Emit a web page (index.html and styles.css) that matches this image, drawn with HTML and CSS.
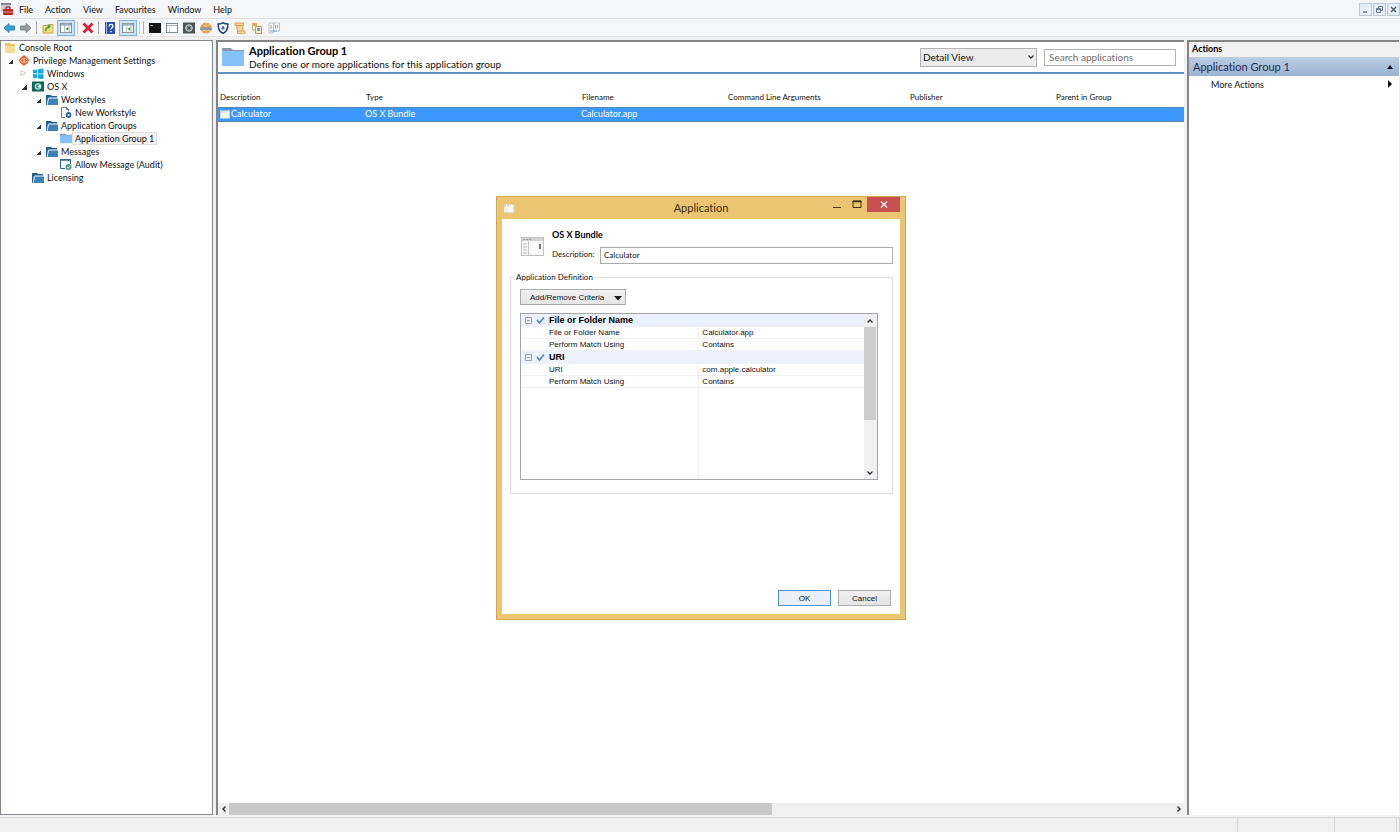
FILE: index.html
```html
<!DOCTYPE html>
<html lang="en">
<head>
<meta charset="utf-8">
<title>Console Root</title>
<link rel="stylesheet" href="styles.css">
</head>
<body>
<svg class="defs" aria-hidden="true">
  <defs>
    <symbol id="folder-dark" viewBox="0 0 12 11"><path d="M0 11V1h5l1 1h5v1.500H2.500L1 11z" fill="#1f5f8f"/><path d="M2.800 4.500H12V11H1.600z" fill="#3b82b5"/><path d="M2.300 4L1.200 10.500" stroke="#e6f0f8" stroke-width=".8"/></symbol>
    <symbol id="folder-light" viewBox="0 0 22 18"><path d="M0 0h9l2 2h11v3H0z" fill="#8e97a8"/><path d="M0 3h22v15H0z" fill="#86c0fb"/></symbol>
    <symbol id="window" viewBox="0 0 12 10"><rect x=".5" y=".5" width="11" height="9" fill="#fbfcfd" stroke="#7e8c98"/><path d="M1 2.500h10" stroke="#a8b4c0"/><path d="M3.500 3v6" stroke="#d5dbe0"/></symbol>
    <symbol id="window-pale" viewBox="0 0 12 10"><rect x=".5" y=".5" width="11" height="9" fill="#fcfbf8" stroke="#d9d4c8"/><path d="M1 2h7" stroke="#b5b5b5" stroke-dasharray="2 1"/><path d="M3.500 3v6" stroke="#dedede"/></symbol>
    <symbol id="pane" viewBox="0 0 13 11"><rect x=".5" y=".5" width="12" height="10" fill="#fff" stroke="#7b8794"/><path d="M1 2h11" stroke="#9fb0c3" stroke-width="2"/><path d="M5 3v7M10 3v7" stroke="#aab5c0"/><path d="M9 4.500v4L6 6.500z" fill="#3a9a3a"/></symbol>
    <symbol id="bundle" viewBox="0 0 23 19"><rect x=".5" y=".5" width="22" height="18" fill="#f6f6f6" stroke="#c2c2c2"/><path d="M1 2.500h21" stroke="#d4d4d4" stroke-width="3"/><path d="M2 2.500h2M5 2.500h2M8 2.500h2" stroke="#999"/><path d="M7.500 4v14" stroke="#c8c8c8"/><path d="M2 7h4M2 10h4M2 13h4M2 16h4" stroke="#bbb"/><rect x="10" y="6" width="7" height="11" fill="#fff"/><path d="M19 7v5" stroke="#777" stroke-width="2"/></symbol>
  </defs>
</svg>

<header class="menubar">
  <svg class="app-icon" viewBox="0 0 12 12"><rect x="0" y="0" width="10" height="8" fill="#c9ccd0"/><path d="M0 1h10" stroke="#7f868e" stroke-width="2"/><rect x="2" y="6" width="10" height="6" rx="1" fill="#bd2323"/><path d="M5 6V4h4v2" fill="none" stroke="#8d1515"/><path d="M2 9h10" stroke="#f5b6b0" stroke-width=".8"/></svg>
  <nav class="menus">
    <button>File</button><button>Action</button><button>View</button><button>Favourites</button><button>Window</button><button>Help</button>
  </nav>
  <div class="mdi">
    <button aria-label="Minimise"><svg viewBox="0 0 9 9"><path d="M2 7h4" stroke="#4c5f78" stroke-width="1.300"/></svg></button>
    <button aria-label="Restore"><svg viewBox="0 0 9 9"><path d="M3.500 3V1.500h4v4H6M1.500 3.500h4v4h-4zM1.500 4.500h4" fill="none" stroke="#4c5f78" stroke-width=".8"/></svg></button>
    <button aria-label="Close"><svg viewBox="0 0 9 9"><path d="M2 2l5 5M7 2L2 7" stroke="#4c5f78" stroke-width="1.400"/></svg></button>
  </div>
</header>

<div class="toolbar">
  <button aria-label="Back"><svg viewBox="0 0 12 11"><path d="M1 5.500L6 1v2.500h5.500v4H6V10z" fill="#35a4dc" stroke="#1d79ae" stroke-width=".8"/></svg></button>
  <button aria-label="Forward"><svg viewBox="0 0 12 11"><path d="M11 5.500L6 1v2.500H.5v4H6V10z" fill="#9a9da0" stroke="#74777a" stroke-width=".8"/></svg></button>
  <i class="sep"></i>
  <button aria-label="Up one level"><svg viewBox="0 0 12 11"><path d="M1 3h4l1-1h5v8.500H1z" fill="#f3dc80" stroke="#b99c45" stroke-width=".8"/><path d="M3.500 8.500c0-3 1-3.500 3-4" fill="none" stroke="#3c9e3c" stroke-width="1.500"/><path d="M5.500 2L9 3.500 6.500 6.500z" fill="#3c9e3c"/></svg></button>
  <button class="on" aria-label="Show console tree"><svg viewBox="0 0 13 11"><use href="#pane"/></svg></button>
  <i class="sep pale"></i>
  <button aria-label="Delete"><svg viewBox="0 0 12 12"><path d="M1.500 1.500l9 9M10.500 1.500l-9 9" stroke="#d32535" stroke-width="2.800"/></svg></button>
  <i class="sep"></i>
  <button aria-label="Help"><svg viewBox="0 0 12 12"><rect x="1" y="0" width="10" height="12" fill="#2b4ea6"/><path d="M2.500 0v12" stroke="#9fb4e8"/><path d="M5 4.500c0-3 4-2.500 4-.3C9 6 7 5.600 7 7.500M7 9v1.300" fill="none" stroke="#fff" stroke-width="1.300"/></svg></button>
  <button class="on" aria-label="Show action pane"><svg viewBox="0 0 13 11"><use href="#pane"/></svg></button>
  <i class="sep pale"></i><i class="sep"></i>
  <button aria-label="Command"><svg viewBox="0 0 12 10"><rect width="12" height="10" fill="#111"/><path d="M1 2.500h3" stroke="#aaa"/></svg></button>
  <button aria-label="Window"><svg viewBox="0 0 12 10"><use href="#window"/></svg></button>
  <button aria-label="Vault"><svg viewBox="0 0 12 11"><rect width="12" height="11" fill="#4a5454"/><circle cx="6" cy="5.500" r="3.300" fill="#7f908f" stroke="#cfdad9"/><path d="M4.500 4l3 3M7.500 4l-3 3" stroke="#344"/></svg></button>
  <button aria-label="Web"><svg viewBox="0 0 12 12"><circle cx="6" cy="6" r="5.500" fill="#e6974a"/><path d="M6 0v12M2 2.500c3 2 5 2 8 0M2 9.500c3-2 5-2 8 0" fill="none" stroke="#fbd9a8" stroke-width=".8"/><path d="M0 5.500h12v2.500H0z" fill="#8b9aa8"/></svg></button>
  <button aria-label="Security"><svg viewBox="0 0 12 12"><path d="M6 .8c2 1.200 3 1.200 4.800 1.200C11 7 9 10 6 11.300 3 10 1 7 1.200 2 3 2 4 2 6 .8z" fill="#fff" stroke="#1f3f75" stroke-width="1.500"/><path d="M6 3.500c1.200 1.500 2 2.300 1.500 4h-3C4 5.800 4.800 5 6 3.500z" fill="#3977c0"/></svg></button>
  <button aria-label="Script"><svg viewBox="0 0 12 12"><path d="M1 1h8.500v2.500H8l1.500 5.500H11v2.500H3.500V9L2.500 3.500H1z" fill="#f8d49a" stroke="#d99b45" stroke-width=".9"/><path d="M2.500 3.500H8M3.500 9h6" stroke="#d99b45" stroke-width=".8"/></svg></button>
  <button aria-label="Package"><svg viewBox="0 0 12 12"><path d="M1 1h5v3H1z" fill="#e5ad4a"/><path d="M4.500 4.500h6v7h-6z" fill="#f7edd2" stroke="#a88d53" stroke-width=".8"/><path d="M6 6h3v3H6z" fill="#8499ab"/><path d="M1.500 3v5h3" fill="none" stroke="#c8ad73"/></svg></button>
  <button aria-label="Report"><svg viewBox="0 0 12 12"><path d="M1 1h4.500v10H1zM5.500 1h6v8h-6z" fill="#f4f8fb" stroke="#a9b8c4" stroke-width=".8"/><path d="M3 3v4M7.500 3v4M9.500 3v3M2 9h7" stroke="#7d9bb8" stroke-width=".9"/></svg></button>
</div>

<main class="workspace">
  <nav class="tree" aria-label="Console tree">
    <ul>
      <li><div class="node"><i class="twist"></i><svg viewBox="0 0 12 11"><path d="M1 1h5l1 1h4v9H1z" fill="#e8c766"/><path d="M1 4h10v7H1z" fill="#f6dd90"/></svg><span>Console Root</span></div>
      <ul>
        <li><div class="node"><i class="twist open"></i><svg viewBox="0 0 12 11"><path d="M6 0l5.500 5.500L6 11 .5 5.500z" fill="#dd5a26"/><circle cx="6" cy="5.500" r="4.300" fill="#e8692f"/><path d="M6 3v5M4.500 3.500l-2 2 2 2M7.500 3.500l2 2-2 2" fill="none" stroke="#fff" stroke-width=".9"/></svg><span>Privilege Management Settings</span></div>
        <ul>
          <li><div class="node"><i class="twist closed"></i><svg viewBox="0 0 12 11"><path d="M1 2l4-.6v4H1zM6 1.200L11.500.4v5H6zM1 6.300h4v4L1 9.700zM6 6.300h5.500v5L6 10.500z" fill="#17a8e3"/></svg><span>Windows</span></div></li>
          <li><div class="node"><i class="twist open"></i><svg viewBox="0 0 12 11"><rect y=".5" width="12" height="10" fill="#11645a"/><circle cx="6" cy="5.500" r="3.300" fill="#bfeee6"/><path d="M5 3.500v4M5 5.500l2-2M5 5.500l2 2" stroke="#11645a"/></svg><span>OS X</span></div>
          <ul>
            <li><div class="node"><i class="twist open"></i><svg viewBox="0 0 12 11"><use href="#folder-dark"/></svg><span>Workstyles</span></div>
              <ul><li><div class="node"><i class="twist"></i><svg viewBox="0 0 12 11"><path d="M5 10.500H1.500V.5h5l2 2v2M6.500.5v2h2" fill="#fff" stroke="#6b7782"/><circle cx="8.500" cy="8" r="2" fill="#fff" stroke="#22689c" stroke-width="1.800"/></svg><span>New Workstyle</span></div></li></ul></li>
            <li><div class="node"><i class="twist open"></i><svg viewBox="0 0 12 11"><use href="#folder-dark"/></svg><span>Application Groups</span></div>
              <ul><li><div class="node"><i class="twist"></i><svg viewBox="0 0 22 18"><use href="#folder-light"/></svg><span class="current">Application Group 1</span></div></li></ul></li>
            <li><div class="node"><i class="twist open"></i><svg viewBox="0 0 12 11"><use href="#folder-dark"/></svg><span>Messages</span></div>
              <ul><li><div class="node"><i class="twist"></i><svg viewBox="0 0 12 11"><path d="M5 9.500H.5v-9h10V5" fill="#fff" stroke="#33678e"/><path d="M0 1h11" stroke="#33678e" stroke-width="1.500"/><circle cx="8.500" cy="8" r="3" fill="#4f9a86"/><path d="M7 8l1.200 1.200L10 6.800" fill="none" stroke="#fff"/></svg><span>Allow Message (Audit)</span></div></li></ul></li>
          </ul></li>
          <li><div class="node"><i class="twist"></i><svg viewBox="0 0 12 11"><use href="#folder-dark"/></svg><span>Licensing</span></div></li>
        </ul></li>
      </ul></li>
    </ul>
  </nav>

  <section class="content">
    <header class="group-head">
      <svg class="group-icon" viewBox="0 0 22 18"><use href="#folder-light"/></svg>
      <div class="group-text">
        <h1>Application Group 1</h1>
        <p>Define one or more applications for this application group</p>
      </div>
      <div class="select">
        <select aria-label="View"><option>Detail View</option></select>
        <svg viewBox="0 0 8 8"><path d="M1.500 2.500L4 5l2.500-2.500" fill="none" stroke="#333" stroke-width="1.300"/></svg>
      </div>
      <input type="search" aria-label="Search applications" placeholder="Search applications">
    </header>
    <table class="apps">
      <colgroup><col class="w1"><col class="w2"><col class="w1"><col class="w3"><col class="w1"><col></colgroup>
      <thead><tr><th>Description</th><th>Type</th><th>Filename</th><th>Command Line Arguments</th><th>Publisher</th><th>Parent in Group</th></tr></thead>
      <tbody><tr><td><svg viewBox="0 0 12 10"><use href="#window-pale"/></svg>Calculator</td><td>OS X Bundle</td><td>Calculator.app</td><td></td><td></td><td></td></tr></tbody>
    </table>
    <div class="hscroll">
      <button aria-label="Scroll left"><svg viewBox="0 0 8 8"><path d="M5.500 1.500L3 4l2.500 2.500" fill="none" stroke="#333" stroke-width="1.400"/></svg></button>
      <div class="track"><div class="thumb"></div></div>
      <button aria-label="Scroll right"><svg viewBox="0 0 8 8"><path d="M2.500 1.500L5 4 2.500 6.500" fill="none" stroke="#333" stroke-width="1.400"/></svg></button>
    </div>
  </section>

  <aside class="actions">
    <h2>Actions</h2>
    <button class="actions-group">Application Group 1<svg viewBox="0 0 8 8"><path d="M1 6l3-4 3 4z" fill="#111"/></svg></button>
    <button class="actions-item">More Actions<svg viewBox="0 0 8 8"><path d="M2 0l4 4-4 4z" fill="#111"/></svg></button>
  </aside>
</main>

<footer class="status"><span></span><span></span><span></span><span></span></footer>

<div class="dialog" role="dialog" aria-labelledby="dialog-title">
  <div class="titlebar">
    <svg viewBox="0 0 12 10"><use href="#window-pale"/></svg>
    <h2 id="dialog-title">Application</h2>
    <div class="caption">
      <button aria-label="Minimise"><svg viewBox="0 0 10 9"><path d="M1 7.500h8" stroke="#4a3a16"/></svg></button>
      <button aria-label="Maximise"><svg viewBox="0 0 10 9"><path d="M1 1h8v6.500H1z" fill="none" stroke="#3d3012"/><path d="M.5 1.500h9" stroke="#3d3012" stroke-width="1.500"/></svg></button>
      <button class="close" aria-label="Close"><svg viewBox="0 0 10 9"><path d="M2 1.500l6 6M8 1.500l-6 6" stroke="#fff" stroke-width="1.200"/></svg></button>
    </div>
  </div>
  <form class="dialog-body">
    <div class="intro">
      <svg viewBox="0 0 23 19"><use href="#bundle"/></svg>
      <div class="intro-text">
        <h3>OS X Bundle</h3>
        <div class="field"><label for="description">Description:</label><input id="description" type="text" value="Calculator"></div>
      </div>
    </div>
    <fieldset>
      <legend>Application Definition</legend>
      <button type="button" class="criteria">Add/Remove Criteria<svg viewBox="0 0 8 8"><path d="M0 2h8L4 6.500z" fill="#111"/></svg></button>
      <div class="grid">
        <div class="grid-main">
          <table>
            <colgroup><col class="name"><col></colgroup>
            <tbody>
              <tr class="cat"><th colspan="2"><div><svg viewBox="0 0 28 10"><path d="M4.500 1.500h6v6h-6zM6 4.500h3" fill="none" stroke="#8d97a3" stroke-width=".9"/><path d="M16 4l2.500 3L23 1.500" fill="none" stroke="#3f8cc6" stroke-width="1.600"/></svg>File or Folder Name</div></th></tr>
              <tr><td>File or Folder Name</td><td>Calculator.app</td></tr>
              <tr><td>Perform Match Using</td><td>Contains</td></tr>
            </tbody>
            <tbody>
              <tr class="cat"><th colspan="2"><div><svg viewBox="0 0 28 10"><path d="M4.500 1.500h6v6h-6zM6 4.500h3" fill="none" stroke="#8d97a3" stroke-width=".9"/><path d="M16 4l2.500 3L23 1.500" fill="none" stroke="#3f8cc6" stroke-width="1.600"/></svg>URI</div></th></tr>
              <tr><td>URI</td><td>com.apple.calculator</td></tr>
              <tr><td>Perform Match Using</td><td>Contains</td></tr>
            </tbody>
          </table>
          <div class="grid-rest"></div>
        </div>
        <div class="vscroll">
          <button type="button" aria-label="Scroll up"><svg viewBox="0 0 8 8"><path d="M1.500 5.500L4 3l2.500 2.500" fill="none" stroke="#333" stroke-width="1.300"/></svg></button>
          <div class="track"><div class="thumb"></div></div>
          <button type="button" aria-label="Scroll down"><svg viewBox="0 0 8 8"><path d="M1.500 2.500L4 5l2.500-2.500" fill="none" stroke="#333" stroke-width="1.300"/></svg></button>
        </div>
      </div>
    </fieldset>
    <div class="buttons"><button type="button" class="ok">OK</button><button type="button">Cancel</button></div>
  </form>
</div>
</body>
</html>
```
FILE: styles.css
```css
* { box-sizing: border-box; }
body {
  margin: 0;
  min-height: 100vh;
  display: flex;
  flex-direction: column;
  background: #f0f0f0;
  color: #111;
  font: 9px/13px Lato, "Open Sans", sans-serif;
  font-variant-ligatures: none;
}
button, input, select { font: inherit; color: inherit; margin: 0; padding: 0; border-radius: 0; }
button { border: 0; background: none; }
h1, h2, h3, p, ul { margin: 0; padding: 0; }
ul { list-style: none; }
svg { display: block; flex: none; }
.defs { position: absolute; width: 0; height: 0; }

.menubar { display: flex; align-items: center; height: 19px; background: #f5f6f7; border-bottom: 1px solid #dcdfe2; }
.app-icon { width: 12px; height: 12px; margin: 0 6px 0 1px; }
.menus { display: flex; gap: 12px; flex: 1; }
.mdi { display: flex; gap: 1px; }
.mdi button { width: 13px; height: 13px; display: grid; place-items: center; background: #e4edf8; border: 1px solid #b9c9dc; }
.mdi svg { width: 9px; height: 9px; }

.toolbar { display: flex; align-items: center; height: 18px; padding-left: 1px; gap: 2px; background: #f5f6f7; border-bottom: 1px solid #e6e6e6; }
.toolbar button { width: 15px; height: 16px; display: grid; place-items: center; }
.toolbar svg { width: 12px; height: 12px; }
.toolbar .on { width: 18px; background: #cfe3f8; border: 1px solid #84b4e4; }
.sep { width: 1px; height: 13px; margin: 0 1px; background: #a9adb1; }
.sep.pale { margin: 0; background: #c6cace; }

.workspace { flex: 1; display: grid; grid-template-columns: 213px minmax(0, 1fr) 212px; gap: 0 3px; padding: 3px 1px 2px 0; }

.tree { background: #fff; border: 1px solid #828790; padding-left: 3px; }
.tree ul ul { padding-left: 14px; }
.node { display: flex; align-items: center; height: 13px; gap: 3px; white-space: nowrap; }
.node svg { width: 12px; height: 11px; }
.tree > ul > li > .node > .twist { display: none; }
.tree > ul > li > ul { padding-left: 0; }
.twist { width: 11px; height: 7px; flex: none; }
.twist.open { background: linear-gradient(135deg, transparent 50%, #333 50%) 4px 2px / 5px 5px no-repeat; }
.twist.closed { display: grid; place-items: center; }
.twist.closed::before { content: "▷"; font: 7px/7px "DejaVu Sans", sans-serif; color: #777; }
.current { background: #f4f4f4; border: 1px solid #dedede; margin-left: -3px; padding: 0 2px; line-height: 11px; }

.content { display: flex; flex-direction: column; background: #fff; border-top: 2px solid #858585; border-left: 2px solid #858585; }
.group-head { display: flex; align-items: center; height: 32px; padding: 0 8px 0 4px; border-bottom: 2px solid #5e93c8; }
.group-icon { width: 22px; height: 18px; margin-right: 5px; }
.group-text { flex: 1; }
.group-text h1 { font-size: 11px; line-height: 14px; color: #000; }
.group-text p { font-size: 10px; line-height: 13px; }
.select { display: grid; align-items: center; width: 117px; margin-right: 7px; }
.select > * { grid-area: 1 / 1; }
.select svg { justify-self: end; width: 8px; height: 8px; margin-right: 2px; pointer-events: none; }
.group-head select { width: 100%; height: 19px; padding-left: 2px; font-size: 10px; border: 1px solid #b3b3b3; background: #ececec; appearance: none; }
.group-head input { width: 132px; height: 17px; padding: 0 4px; font-size: 10px; border: 1px solid #b3b3b3; background: #fff; outline: 0; appearance: none; }
.group-head input::placeholder { color: #6d6d6d; opacity: 1; }

.apps { width: 100%; table-layout: fixed; border-collapse: collapse; }
.w1 { width: 146px; }
.w2 { width: 216px; }
.w3 { width: 182px; }
.apps th { height: 33px; padding: 14px 0 0 2px; text-align: left; font-size: 8px; font-weight: 400; }
.apps td { height: 14px; padding: 0 0 0 2px; line-height: 12px; background: #3c98fc; color: #fff; border: solid #5a86b4; border-width: 1px 0; }
.apps td:nth-child(n + 2) { padding-left: 1px; }
.apps td svg { display: inline-block; width: 10px; height: 9px; margin-right: 1px; vertical-align: -2px; }
.hscroll { display: flex; margin-top: auto; height: 12px; background: #f0f0f0; }
.hscroll button { width: 11px; display: grid; place-items: center; }
.hscroll svg, .vscroll svg { width: 8px; height: 8px; }
.hscroll .track { flex: 1; }
.hscroll .thumb { width: 57.5%; height: 100%; background: #c9c9c9; }

.actions { display: flex; flex-direction: column; background: #fff; border-top: 2px solid #858585; border-left: 2px solid #858585; }
.actions h2 { height: 15px; padding-left: 3px; font-size: 9px; line-height: 14px; background: #f0f0f0; color: #000; }
.actions button { display: flex; align-items: center; justify-content: space-between; padding-right: 5px; text-align: left; }
.actions svg { width: 8px; height: 8px; }
.actions .actions-group { height: 19px; padding-left: 4px; font-size: 11px; color: #1d2c4c; background: linear-gradient(#bccde3, #9ab3d3); }
.actions .actions-item { height: 16px; padding-left: 22px; }

.status { display: grid; grid-template-columns: minmax(0, 1fr) 97px 62px 3px; height: 15px; border-top: 1px solid #dcdcdc; }
.status span { border-right: 1px solid #d6d6d6; }

.dialog { position: absolute; left: 496px; top: 196px; width: 410px; height: 424px; display: flex; flex-direction: column; padding: 0 5px 5px; background: #ecc572; border: 1px solid #d0a851; font: 8px/12px "Liberation Sans", Arial, sans-serif; font-variant-ligatures: none; }
.titlebar { display: grid; grid-template-columns: 1fr auto 1fr; height: 22px; align-items: center; }
.titlebar > svg { width: 12px; height: 9px; margin-left: 1px; }
.titlebar h2 { font-family: Lato, "Open Sans", sans-serif; font-size: 11px; font-weight: 400; line-height: 22px; color: #3a2e14; }
.caption { display: flex; justify-content: flex-end; align-self: start; }
.caption button { width: 20px; height: 15px; display: grid; place-items: center; }
.caption svg { width: 10px; height: 9px; }
.caption .close { width: 33px; background: #c75050; }
.dialog-body { flex: 1; display: flex; flex-direction: column; padding: 10px 7px 8px 8px; background: #fff; }
.intro { display: flex; align-items: center; gap: 8px; padding-left: 11px; font-family: Lato, "Open Sans", sans-serif; }
.intro > svg { width: 23px; height: 19px; }
.intro-text { flex: 1; }
.intro h3 { font-size: 9px; line-height: 12px; margin-bottom: 6px; color: #000; }
.field { display: flex; gap: 6px; line-height: 15px; }
.field label { width: 42px; }
.field input { flex: 1; height: 17px; padding: 0 3px 2px; border: 1px solid #ababab; background: #fff; }
fieldset { margin: 7px 0 0; padding: 6px 14px 13px 9px; border: 1px solid #dcdcdc; }
legend { margin-left: -6px; padding: 0 2px; font-family: Lato, "Open Sans", sans-serif; }
.criteria { display: flex; align-items: center; justify-content: space-between; width: 106px; height: 16px; padding: 1px 3px 0 9px; border: 1px solid #acacac; background: linear-gradient(#f0f0f0, #e5e5e5); }
.criteria svg { width: 8px; height: 8px; }
.grid { display: flex; height: 167px; margin-top: 8px; border: 1px solid #a3a7ad; }
.grid-main { flex: 1; display: flex; flex-direction: column; }
.grid table { width: 100%; table-layout: fixed; border-collapse: separate; border-spacing: 0; }
.name { width: 52%; }
.grid th { padding: 0; text-align: left; font-size: 9px; background: #edf1fd; color: #000; }
.grid th div { display: flex; align-items: center; height: 13px; line-height: 13px; }
.grid th svg { width: 28px; height: 10px; }
.grid td { padding: 0; height: 12px; line-height: 11px; border-bottom: 1px solid #f0f0f0; }
.grid td:first-child { padding-left: 28px; border-right: 1px solid #f0f0f0; }
.grid td + td { padding-left: 3px; }
.grid-rest { flex: 1; width: 52%; border-right: 1px solid #f0f0f0; }
.vscroll { width: 13px; display: flex; flex-direction: column; background: #f0f0f0; padding-right: 1px; }
.vscroll button { height: 13px; display: grid; place-items: center; }
.vscroll .track { flex: 1; }
.vscroll .thumb { height: 67%; background: #cdcdcd; }
.buttons { display: flex; justify-content: flex-end; gap: 7px; margin-top: auto; padding-right: 2px; }
.buttons button { width: 53px; height: 16px; padding-top: 1px; border: 1px solid #acacac; background: linear-gradient(#f0f0f0, #e5e5e5); }
.buttons .ok { border-color: #4d92d6; background: #e8eff7; }
```
